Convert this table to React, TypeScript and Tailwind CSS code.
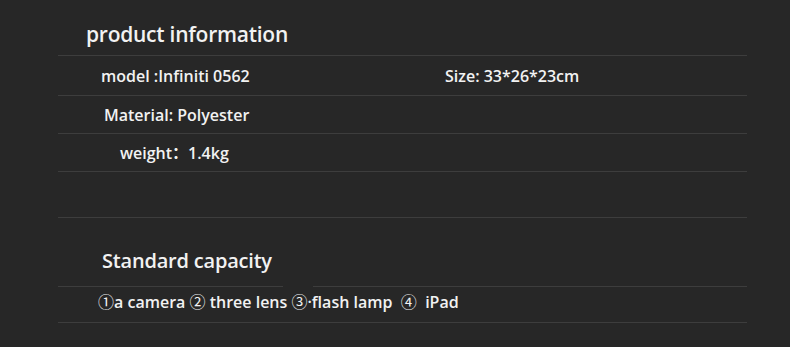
import React from "react";

const rows = [
  { left: "model :Infiniti 0562", pad: "pl-[43px]", right: "Size: 33*26*23cm", h: "h-[40px]" },
  { left: "Material: Polyester", pad: "pl-[46px]", right: "", h: "h-[38px]" },
  { left: "weight：1.4kg", pad: "pl-[62px]", right: "", h: "h-[38px]" },
];

export default function App() {
  return (
    <div
      className="w-[790px] h-[347px] bg-[#272727] text-[#f2f2f2] overflow-hidden"
      style={{ fontFamily: '"Open Sans", "Noto Sans CJK SC", sans-serif' }}
    >
      <div className="ml-[58px] w-[689px]">
        {/* product information */}
        <div className="h-[56px] border-b border-[#3d3d3d] flex items-end pb-[10px] pl-[28px]">
          <h2 className="text-[21px] font-semibold tracking-[-0.25px] leading-none">
            product information
          </h2>
        </div>

        {rows.map((r) => (
          <div
            key={r.left}
            className={`${r.h} border-b border-[#3d3d3d] flex items-center text-[16px] font-semibold tracking-[0px]`}
          >
            <span className={`${r.pad} w-[387px] shrink-0`}>{r.left}</span>
            {r.right && <span>{r.right}</span>}
          </div>
        ))}

        <div className="h-[46px] border-b border-[#3d3d3d]" />

        {/* Standard capacity */}
        <div className="h-[69px] flex flex-col justify-end">
          <div className="flex items-end pb-[15px] pl-[44px]">
            <h3 className="text-[20px] font-semibold tracking-[-0.2px] leading-none">
              Standard capacity
            </h3>
          </div>
          <div className="flex h-px">
            <div className="w-[225px] bg-[#3d3d3d]" />
            <div className="w-[30px]" />
            <div className="flex-1 bg-[#3d3d3d]" />
          </div>
        </div>

        <div className="h-[36px] border-b border-[#3d3d3d] flex items-start pt-[3px] pl-[40px] text-[16px] font-semibold whitespace-pre">
          <span className="font-normal">①</span>
          <span>a camera </span>
          <span className="font-normal">②</span>
          <span> three lens </span>
          <span className="font-normal">③</span>
          <span>·flash lamp </span>
          <span className="font-normal"> ④</span>
          <span>  iPad</span>
        </div>
      </div>
    </div>
  );
}
